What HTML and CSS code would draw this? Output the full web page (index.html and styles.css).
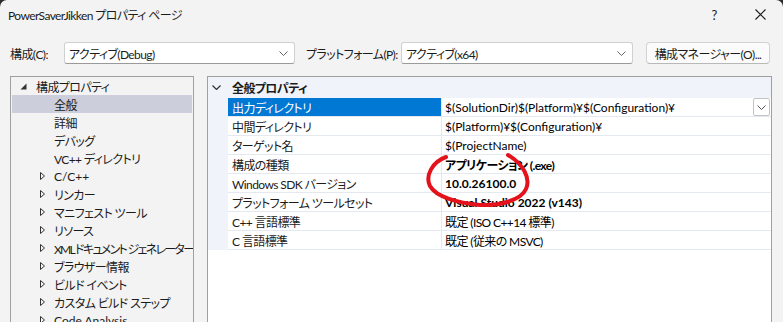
FILE: index.html
```html
<!DOCTYPE html>
<html lang="ja">
<head>
    <meta charset="UTF-8">
    <title>PowerSaverJikken プロパティ ページ</title>
<link rel="stylesheet" href="styles.css">
</head>
<body>
<div class="dialog">

    <!-- title bar -->
    <div class="titlebar">
        <div class="title">PowerSaverJikken プロパティ ページ</div>
        <div class="caption">?</div>
        <div class="caption">
            <svg width="11" height="11" viewBox="0 0 11 11"><path d="M0.5 0.5 L10.5 10.5 M10.5 0.5 L0.5 10.5" stroke="#1b1b1b" stroke-width="1.1"/></svg>
        </div>
    </div>

    <!-- configuration row -->
    <div class="toolbar">
        <div class="label cfg-label">構成(C):</div>
        <div class="combo cfg-combo">
            <span>アクティブ(Debug)</span>
            <svg class="chev" width="9" height="5" viewBox="0 0 9 5"><path d="M0.5 0.5 L4.5 4.5 L8.5 0.5" fill="none" stroke="#666" stroke-width="1"/></svg>
        </div>
        <div class="label plat-label">プラットフォーム(P):</div>
        <div class="combo plat-combo">
            <span>アクティブ(x64)</span>
            <svg class="chev" width="9" height="5" viewBox="0 0 9 5"><path d="M0.5 0.5 L4.5 4.5 L8.5 0.5" fill="none" stroke="#666" stroke-width="1"/></svg>
        </div>
        <div class="btn">構成マネージャー(O)...</div>
    </div>

    <div class="main">
        <!-- tree -->
        <div class="tree">
            <div class="node top">
                <svg class="expanded" width="7" height="7" viewBox="0 0 7 7"><path d="M6.5 0.5 L6.5 6.5 L0.5 6.5 Z" fill="#333"/></svg>
                <span>構成プロパティ</span>
            </div>
            <div class="node leaf selected"><span>全般</span></div>
            <div class="node leaf"><span>詳細</span></div>
            <div class="node leaf"><span>デバッグ</span></div>
            <div class="node leaf"><span>VC++ ディレクトリ</span></div>
            <div class="node branch"><svg class="collapsed" width="5" height="8" viewBox="0 0 5 8"><path d="M0.5 0.5 L4.5 4 L0.5 7.5 Z" fill="none" stroke="#333" stroke-width="1"/></svg><span class="latin">C/C++</span></div>
            <div class="node branch"><svg class="collapsed" width="5" height="8" viewBox="0 0 5 8"><path d="M0.5 0.5 L4.5 4 L0.5 7.5 Z" fill="none" stroke="#333" stroke-width="1"/></svg><span>リンカー</span></div>
            <div class="node branch"><svg class="collapsed" width="5" height="8" viewBox="0 0 5 8"><path d="M0.5 0.5 L4.5 4 L0.5 7.5 Z" fill="none" stroke="#333" stroke-width="1"/></svg><span>マニフェスト ツール</span></div>
            <div class="node branch"><svg class="collapsed" width="5" height="8" viewBox="0 0 5 8"><path d="M0.5 0.5 L4.5 4 L0.5 7.5 Z" fill="none" stroke="#333" stroke-width="1"/></svg><span>リソース</span></div>
            <div class="node branch"><svg class="collapsed" width="5" height="8" viewBox="0 0 5 8"><path d="M0.5 0.5 L4.5 4 L0.5 7.5 Z" fill="none" stroke="#333" stroke-width="1"/></svg><span class="tight">XML ドキュメント ジェネレーター</span></div>
            <div class="node branch"><svg class="collapsed" width="5" height="8" viewBox="0 0 5 8"><path d="M0.5 0.5 L4.5 4 L0.5 7.5 Z" fill="none" stroke="#333" stroke-width="1"/></svg><span>ブラウザー情報</span></div>
            <div class="node branch"><svg class="collapsed" width="5" height="8" viewBox="0 0 5 8"><path d="M0.5 0.5 L4.5 4 L0.5 7.5 Z" fill="none" stroke="#333" stroke-width="1"/></svg><span>ビルド イベント</span></div>
            <div class="node branch"><svg class="collapsed" width="5" height="8" viewBox="0 0 5 8"><path d="M0.5 0.5 L4.5 4 L0.5 7.5 Z" fill="none" stroke="#333" stroke-width="1"/></svg><span>カスタム ビルド ステップ</span></div>
            <div class="node branch"><svg class="collapsed" width="5" height="8" viewBox="0 0 5 8"><path d="M0.5 0.5 L4.5 4 L0.5 7.5 Z" fill="none" stroke="#333" stroke-width="1"/></svg><span class="latin">Code Analysis</span></div>
        </div>

        <!-- property grid -->
        <div class="grid">
            <div class="group">
                <svg class="group-chev" width="9" height="5" viewBox="0 0 9 5"><path d="M0.5 0.5 L4.5 4.5 L8.5 0.5" fill="none" stroke="#333" stroke-width="1.2"/></svg>
                <span>全般プロパティ</span>
            </div>
            <div class="row selected">
                <div class="gutter"></div>
                <div class="name">出力ディレクトリ</div>
                <div class="value latin">$(SolutionDir)$(Platform)¥$(Configuration)¥
                    <div class="drop"><svg width="9" height="5" viewBox="0 0 9 5"><path d="M0.5 0.5 L4.5 4.5 L8.5 0.5" fill="none" stroke="#555" stroke-width="1"/></svg></div>
                </div>
            </div>
            <div class="row">
                <div class="gutter"></div>
                <div class="name">中間ディレクトリ</div>
                <div class="value latin">$(Platform)¥$(Configuration)¥</div>
            </div>
            <div class="row">
                <div class="gutter"></div>
                <div class="name">ターゲット名</div>
                <div class="value latin">$(ProjectName)</div>
            </div>
            <div class="row">
                <div class="gutter"></div>
                <div class="name">構成の種類</div>
                <div class="value bold">アプリケーション (.exe)</div>
            </div>
            <div class="row">
                <div class="gutter"></div>
                <div class="name">Windows SDK バージョン</div>
                <div class="value bold latin">10.0.26100.0</div>
            </div>
            <div class="row">
                <div class="gutter"></div>
                <div class="name">プラットフォーム ツールセット</div>
                <div class="value bold latin">Visual Studio 2022 (v143)</div>
            </div>
            <div class="row">
                <div class="gutter"></div>
                <div class="name">C++ 言語標準</div>
                <div class="value">既定 (ISO C++14 標準)</div>
            </div>
            <div class="row">
                <div class="gutter"></div>
                <div class="name">C 言語標準</div>
                <div class="value">既定 (従来の MSVC)</div>
            </div>
        </div>
    </div>

    <!-- hand drawn mark -->
    <svg class="mark" width="783" height="322" viewBox="0 0 783 322">
        <path d="M446 157 C432 162, 425 176, 430 186 C436 197, 458 203, 480 205 C500 206, 521 200, 526 189 C531 178, 523 164, 508 155" fill="none" stroke="#e3121b" stroke-width="4" stroke-linecap="round"/>
    </svg>
</div>
</body>
</html>
```

FILE: styles.css
```css
*{
    margin: 0;
    padding: 0;
    box-sizing: border-box;
}
html, body{
    background: #2b2b2b;
}
body{
    width: 783px;
    height: 322px;
    overflow: hidden;
    font-family: Lato, "Noto Sans CJK JP", sans-serif;
    font-feature-settings: "palt";
    font-size: 12px;
    letter-spacing: -0.6px;
    color: #1b1b1b;
}
.latin{
    letter-spacing: 0;
}
.tight{
    letter-spacing: -1.7px;
}
svg{
    flex-shrink: 0;
}
.dialog{
    position: relative;
    width: 783px;
    height: 322px;
    background: #f3f3f3;
    border-top-left-radius: 7px;
    border-top-right-radius: 7px;
    overflow: hidden;
}
.titlebar{
    display: flex;
    align-items: center;
    height: 29px;
    padding-left: 8px;
}
.title{
    flex: 1;
}
.caption{
    width: 46px;
    height: 29px;
    display: flex;
    align-items: center;
    justify-content: center;
    font-size: 13px;
}
.toolbar{
    display: flex;
    align-items: center;
    height: 22px;
    margin-top: 13px;
    padding-left: 10px;
    white-space: nowrap;
}
.toolbar > div{
    flex-shrink: 0;
}
.cfg-label{
    width: 54px;
}
.plat-label{
    width: 95px;
    margin-left: 11px;
}
.combo{
    display: flex;
    align-items: center;
    justify-content: space-between;
    height: 22px;
    padding: 0 6px 0 4px;
    background: #fff;
    border: 1px solid #d0d0d0;
    border-bottom-color: #9a9a9a;
    border-radius: 3px;
}
.cfg-combo{
    width: 231px;
}
.plat-combo{
    width: 232px;
}
.btn{
    width: 124px;
    height: 22px;
    margin-left: 13px;
    display: flex;
    align-items: center;
    justify-content: center;
    background: #fbfbfb;
    border: 1px solid #d3d3d3;
    border-bottom-color: #b8b8b8;
    border-radius: 4px;
}
.main{
    display: flex;
    margin-top: 12px;
    padding-left: 10px;
    gap: 13px;
}
.tree{
    width: 184px;
    height: 260px;
    border: 1px solid #a0a0a0;
    background: #f3f3f3;
    overflow: hidden;
}
.node{
    display: flex;
    align-items: center;
    height: 18px;
    white-space: nowrap;
}
.node.top{
    padding-left: 9px;
}
.node.top span{
    margin-left: 9px;
}
.node.leaf{
    padding-left: 43px;
}
.node.branch{
    padding-left: 29px;
}
.node.branch span{
    margin-left: 9px;
}
.node.selected{
    background: #cccedb;
    margin: 0 1px;
    padding-left: 42px;
}
.grid{
    width: 565px;
    height: 260px;
    border: 1px solid #a0a0a0;
    background: #fff;
}
.group{
    display: flex;
    align-items: center;
    height: 21px;
    background: #f0f4fa;
    font-weight: bold;
}
.group-chev{
    margin-left: 4px;
    margin-right: 11px;
}
.row{
    display: flex;
    height: 19px;
}
.gutter{
    width: 20px;
    background: #f0f4fa;
}
.name, .value{
    display: flex;
    align-items: center;
    border-bottom: 1px solid #e4e9f0;
    white-space: nowrap;
}
.name{
    width: 214px;
    padding-left: 4px;
    border-right: 1px solid #e4e9f0;
}
.value{
    flex: 1;
    padding-left: 3px;
    color: #000;
}
.bold{
    font-weight: bold;
}
.row.selected .name{
    background: #0078d4;
    color: #fff;
}
.drop{
    margin-left: auto;
    margin-right: 1px;
    width: 17px;
    height: 18px;
    display: flex;
    align-items: center;
    justify-content: center;
    background: #fff;
    border: 1px solid #c4c4c4;
    border-radius: 2px;
}
.mark{
    position: absolute;
    left: 0;
    top: 0;
    pointer-events: none;
}
```
